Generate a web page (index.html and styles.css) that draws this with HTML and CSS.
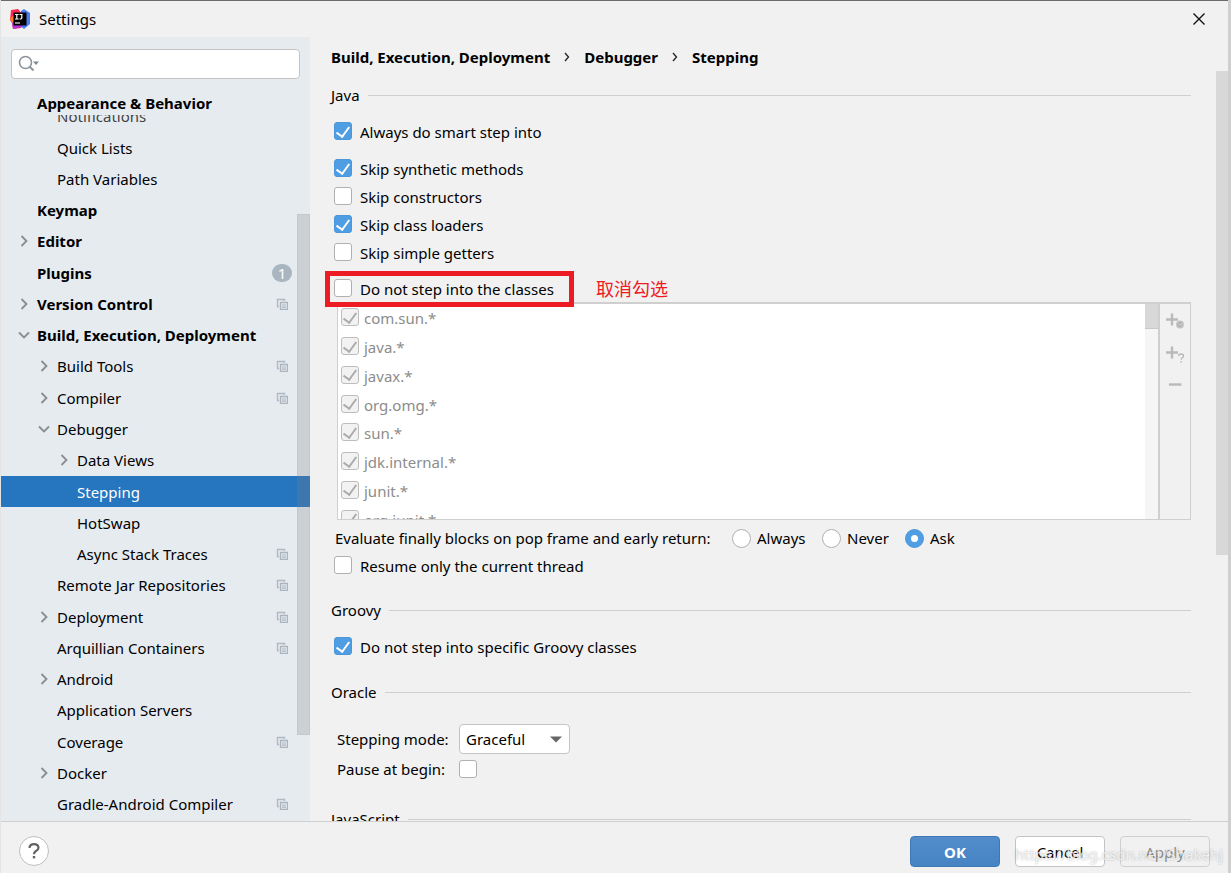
FILE: index.html
```
<!DOCTYPE html>
<html lang="en">
<head>
<meta charset="utf-8">
<title>Settings</title>
<link rel="stylesheet" href="styles.css">
</head>
<body>
<svg class="defs" aria-hidden="true">
  <symbol id="right" viewBox="0 0 12 12"><path d="M3.500 1l5 5-5 5" fill="none" stroke="#8a8d90" stroke-width="1.800"/></symbol>
  <symbol id="down" viewBox="0 0 12 12"><path d="M1 3.500l5 5 5-5" fill="none" stroke="#8a8d90" stroke-width="1.800"/></symbol>
  <symbol id="copy" viewBox="0 0 12 12"><path d="M3 8.500H1.500V1.500h7V3" fill="none" stroke="#b0b9c1" stroke-width="1.400"/><path d="M4.500 4.500h7v7h-7z" fill="#e6ebf0" stroke="#a9b4bd" stroke-width="1.400"/><path d="M6 7h4M6 9.200h4" stroke="#a9b4bd" stroke-width="1.200"/></symbol>
</svg>
<div class="window">
  <header class="titlebar">
    <svg class="logo" viewBox="0 0 20 20">
      <path d="M1 1l7-1 5 6-2 13-8 1L2 14l-2-3z" fill="#fe2857"/>
      <path d="M0 9l5-3v9l-3-1z" fill="#fc801d"/>
      <path d="M11 2l3-2 6 4v11l-6 5-4-3z" fill="#4a7cf0"/>
      <path d="M2 14l9-10 5 1-4 13-9 2z" fill="#b034d8"/>
      <path d="M3.500 3.500h13v13h-13z" fill="#000"/>
      <path d="M5 5.500h3.600M6.800 5.500v4.500M5 10h3.600M9.500 5.500h3M11.800 5v3.700q0 1.500-2.300 1.300" fill="none" stroke="#fff" stroke-width="1.200"/>
      <path d="M5 14h5" stroke="#fff" stroke-width="1.100"/>
    </svg>
    <h1 class="title">Settings</h1>
    <button class="close" aria-label="Close"><svg viewBox="0 0 12 12"><path d="M.5.5l11 11M11.500.5l-11 11" stroke="#111" stroke-width="1.400"/></svg></button>
  </header>

  <div class="body">
    <aside class="sidebar">
      <div class="search">
        <svg viewBox="0 0 22 18"><circle cx="7.500" cy="7.500" r="6" fill="none" stroke="#8b949c" stroke-width="1.600"/><path d="M11.500 11.500l4 4" stroke="#8b949c" stroke-width="2"/><path d="M15 6.500h6l-3 3.500z" fill="#7d8790"/></svg>
        <input type="text" aria-label="Search settings">
      </div>
      <div class="tree-head">Appearance &amp; Behavior</div>
      <ul class="tree">
        <li class="l1 cut"><i></i><span>Notifications</span></li>
        <li class="l1"><i></i><span>Quick Lists</span></li>
        <li class="l1"><i></i><span>Path Variables</span></li>
        <li class="l0"><i></i><span>Keymap</span></li>
        <li class="l0"><i><svg><use href="#right"/></svg></i><span>Editor</span></li>
        <li class="l0"><i></i><span>Plugins</span><b><em class="count">1</em></b></li>
        <li class="l0"><i><svg><use href="#right"/></svg></i><span>Version Control</span><b><svg><use href="#copy"/></svg></b></li>
        <li class="l0"><i><svg><use href="#down"/></svg></i><span>Build, Execution, Deployment</span></li>
        <li class="l1"><i><svg><use href="#right"/></svg></i><span>Build Tools</span><b><svg><use href="#copy"/></svg></b></li>
        <li class="l1"><i><svg><use href="#right"/></svg></i><span>Compiler</span><b><svg><use href="#copy"/></svg></b></li>
        <li class="l1"><i><svg><use href="#down"/></svg></i><span>Debugger</span></li>
        <li class="l2"><i><svg><use href="#right"/></svg></i><span>Data Views</span></li>
        <li class="l2 selected"><i></i><span>Stepping</span></li>
        <li class="l2"><i></i><span>HotSwap</span></li>
        <li class="l2"><i></i><span>Async Stack Traces</span><b><svg><use href="#copy"/></svg></b></li>
        <li class="l1"><i></i><span>Remote Jar Repositories</span><b><svg><use href="#copy"/></svg></b></li>
        <li class="l1"><i><svg><use href="#right"/></svg></i><span>Deployment</span><b><svg><use href="#copy"/></svg></b></li>
        <li class="l1"><i></i><span>Arquillian Containers</span><b><svg><use href="#copy"/></svg></b></li>
        <li class="l1"><i><svg><use href="#right"/></svg></i><span>Android</span></li>
        <li class="l1"><i></i><span>Application Servers</span></li>
        <li class="l1"><i></i><span>Coverage</span><b><svg><use href="#copy"/></svg></b></li>
        <li class="l1"><i><svg><use href="#right"/></svg></i><span>Docker</span></li>
        <li class="l1"><i></i><span>Gradle-Android Compiler</span><b><svg><use href="#copy"/></svg></b></li>
      </ul>
      <div class="side-thumb"></div>
    </aside>

    <main class="main">
      <nav class="crumbs">
        <span>Build, Execution, Deployment</span>
        <svg viewBox="0 0 6 10"><path d="M1 1l3.500 4L1 9" fill="none" stroke="#222" stroke-width="1.300"/></svg>
        <span>Debugger</span>
        <svg viewBox="0 0 6 10"><path d="M1 1l3.500 4L1 9" fill="none" stroke="#222" stroke-width="1.300"/></svg>
        <span>Stepping</span>
      </nav>
      <div class="scroll">
        <div class="content">
          <section>
            <h2 class="group">Java</h2>
            <label class="check lead"><input type="checkbox" checked>Always do smart step into</label>
            <label class="check"><input type="checkbox" checked>Skip synthetic methods</label>
            <label class="check"><input type="checkbox">Skip constructors</label>
            <label class="check"><input type="checkbox" checked>Skip class loaders</label>
            <label class="check"><input type="checkbox">Skip simple getters</label>
            <div class="marked">
              <label class="check boxed"><input type="checkbox">Do not step into the classes</label>
              <span class="note">取消勾选</span>
            </div>
            <div class="panel">
              <ul class="classes">
                <li><label><input type="checkbox" checked disabled>com.sun.*</label></li>
                <li><label><input type="checkbox" checked disabled>java.*</label></li>
                <li><label><input type="checkbox" checked disabled>javax.*</label></li>
                <li><label><input type="checkbox" checked disabled>org.omg.*</label></li>
                <li><label><input type="checkbox" checked disabled>sun.*</label></li>
                <li><label><input type="checkbox" checked disabled>jdk.internal.*</label></li>
                <li><label><input type="checkbox" checked disabled>junit.*</label></li>
                <li><label><input type="checkbox" checked disabled>org.junit.*</label></li>
              </ul>
              <div class="track"><div class="thumb"></div></div>
              <div class="tools">
                <button aria-label="Add class" disabled><svg viewBox="0 0 20 18"><path d="M1 7.500h12M7 1.500v12" stroke="#b9b9b9" stroke-width="2.400"/><circle cx="15" cy="12.500" r="4" fill="#c4c4c4"/><path d="M16.500 11.200a2 2 0 1 0 0 2.600" fill="none" stroke="#aaa"/></svg></button>
                <button aria-label="Add pattern" disabled><svg viewBox="0 0 20 18"><path d="M1 7.500h12M7 1.500v12" stroke="#b9b9b9" stroke-width="2.400"/><path d="M13.500 11q.3-2 2.600-2t2.400 2q0 1.300-1.500 2-.8.500-.8 1.800M16.200 16v1.500" fill="none" stroke="#b4b4b4" stroke-width="1.300"/></svg></button>
                <button aria-label="Remove" disabled><svg viewBox="0 0 20 18"><path d="M4 6.500h12.500" stroke="#b9b9b9" stroke-width="2.400"/></svg></button>
              </div>
            </div>
            <fieldset class="radios">
              <legend class="hidden">Evaluate finally blocks</legend>
              <span class="question">Evaluate finally blocks on pop frame and early return:</span>
              <label><input type="radio" name="fin">Always</label>
              <label><input type="radio" name="fin">Never</label>
              <label><input type="radio" name="fin" checked>Ask</label>
            </fieldset>
            <label class="check"><input type="checkbox">Resume only the current thread</label>
          </section>
          <section class="groovy">
            <h2 class="group">Groovy</h2>
            <label class="check"><input type="checkbox" checked>Do not step into specific Groovy classes</label>
          </section>
          <section class="oracle">
            <h2 class="group">Oracle</h2>
            <div class="form">
              <label for="mode">Stepping mode:</label>
              <div class="select"><select id="mode"><option>Graceful</option></select><svg viewBox="0 0 12 7"><path d="M0 .5h12l-6 6z" fill="#666"/></svg></div>
              <label for="pause">Pause at begin:</label>
              <input type="checkbox" id="pause">
            </div>
          </section>
          <section class="javascript">
            <h2 class="group">JavaScript</h2>
          </section>
        </div>
        <div class="main-track"><div class="main-thumb"></div></div>
      </div>
    </main>
  </div>

  <footer class="footer">
    <button class="help" aria-label="Help"><svg viewBox="0 0 12 16"><path d="M1.500 5Q1.700 1.200 6 1.200T10.500 4.800Q10.500 6.600 8 8 6 9.200 6 11.200" fill="none" stroke="#636363" stroke-width="2.200"/><path d="M4.800 13h2.400v2.400H4.800z" fill="#636363"/></svg></button>
    <button class="btn primary">OK</button>
    <button class="btn">Cancel</button>
    <button class="btn off" disabled>Apply</button>
    <span class="watermark">https://blog.csdn.net/Shakehj</span>
  </footer>
</div>
</body>
</html>
```
FILE: styles.css
```
* { box-sizing: border-box; }
html, body { height: 100%; }
body {
  margin: 0;
  padding: 0 3px 0 1px;
  background: linear-gradient(90deg, #e4e4e4 50%, #cfcfcf 50%);
  font: 15px/20px "Noto Sans", "Noto Sans CJK SC", sans-serif;
  color: #000;
  overflow: hidden;
}
button, input, select { font: inherit; color: inherit; margin: 0; }
h1, h2, ul { margin: 0; padding: 0; font-size: inherit; font-weight: normal; list-style: none; }
svg { display: block; flex: none; }
.defs { position: absolute; width: 0; height: 0; }
.hidden { position: absolute; width: 1px; height: 1px; overflow: hidden; clip-path: inset(50%); padding: 0; }

.window {
  height: 100%;
  display: grid;
  grid-template-rows: 36px minmax(0, 1fr) 51px;
  background: #f1f1f1;
  border-top: 1px solid #6d6a6c;
}
.titlebar { display: flex; align-items: center; gap: 9px; padding: 0 23px 0 9px; }
.logo { width: 20px; height: 20px; }
.title { flex: 1; }
.close { border: 0; padding: 0; background: none; }
.close svg { width: 12px; height: 12px; }

.body { display: grid; grid-template-columns: 309px minmax(0, 1fr); grid-template-rows: minmax(0, 1fr); border-bottom: 1px solid #cfcfcf; }

.sidebar { position: relative; display: flex; flex-direction: column; min-height: 0; background: #e6ebf0; }
.search {
  display: flex; align-items: center;
  height: 30px; margin: 12px 10px 8px; padding-left: 6px;
  background: #fff; border: 1px solid #c4c4c4; border-radius: 4px;
}
.search svg { width: 22px; height: 18px; }
.search input { flex: 1; min-width: 0; border: 0; outline: 0; background: none; }
.tree-head { padding: 6px 0 2px 36px; font-weight: bold; }
.tree { flex: 1; min-height: 0; display: flex; flex-direction: column; padding-bottom: 1px; }
.tree li { flex: 1; display: flex; align-items: center; min-height: 0; padding-right: 18px; }
.tree li.l0 { padding-left: 17px; font-weight: bold; }
.tree li.l1 { padding-left: 37px; }
.tree li.l2 { padding-left: 57px; }
.tree li.cut { flex: 0 0 17px; align-items: flex-end; overflow: hidden; color: #444; }
.tree li.cut span { line-height: 32px; }
.tree i { width: 19px; flex: none; }
.tree i svg { width: 12px; height: 12px; }
.tree span { flex: 1; white-space: nowrap; }
.tree b { width: 20px; display: flex; justify-content: center; font-weight: normal; }
.tree b svg { width: 12px; height: 12px; }
.count { width: 20px; height: 18px; border-radius: 9px; background: #a9b5bf; color: #fff; font-style: normal; line-height: 18px; text-align: center; }
.tree .selected { background: #2675bf; color: #fff; }
.side-thumb { position: absolute; right: 0; top: 177px; bottom: 11%; width: 13px; background: rgba(128, 128, 128, .25); border: 1px solid rgba(128, 128, 128, .1); }

.main { display: flex; flex-direction: column; min-height: 0; }
.crumbs { display: flex; align-items: center; gap: 14px; padding: 10px 21px 4px; font-weight: bold; }
.crumbs svg { width: 6px; height: 10px; }
.scroll { flex: 1; min-height: 0; display: grid; grid-template-columns: minmax(0, 1fr) 12px; grid-template-rows: minmax(0, 1fr); overflow: hidden; }
.content { min-height: 0; padding: 14px 25px 0 21px; overflow: hidden; }
.main-thumb { height: 484px; background: #d8d8d8; }

.group { display: flex; align-items: center; gap: 8px; }
.group::after { content: ""; flex: 1; height: 1px; background: #cfcfcf; }

input[type="checkbox"], input[type="radio"] {
  appearance: none; flex: none;
  display: grid; place-items: center;
  width: 18px; height: 18px;
  background: #fff; border: 1px solid #b0b0b0; border-radius: 3px;
}
input[type="checkbox"]:checked { background: #4f9ee3; border-color: #4b97d9; }
input[type="checkbox"]:checked::before {
  content: ""; width: 6px; height: 11px;
  border: solid #fff; border-width: 0 2px 2px 0;
  transform: translateY(-1px) rotate(36deg);
}
input[type="checkbox"]:checked:disabled { background: #f2f2f2; border-color: #bdbdbd; }
input[type="checkbox"]:checked:disabled::before { border-color: #ababab; }
input[type="radio"] { border-radius: 50%; width: 19px; height: 19px; }
input[type="radio"]:checked { background: #4f9ee3; border-color: #4b97d9; }
input[type="radio"]:checked::before { content: ""; width: 7px; height: 7px; border-radius: 50%; background: #fff; }
label input[type="checkbox"] { margin-bottom: 2px; }

.check { display: flex; align-items: center; gap: 8px; height: 28px; padding-left: 3px; }
.lead { margin: 13px 0 9px; }
.marked { display: flex; align-items: center; gap: 28px; margin-top: 8px; }
.boxed { position: relative; height: 27px; min-width: 237px; }
.boxed::after { content: ""; position: absolute; inset: -4px -6px -5px -6px; border: 5px solid #ed1c24; z-index: 1; }
.note { color: #ed1c24; font: 18px/27px "Noto Sans CJK SC", sans-serif; }

.panel {
  display: grid; grid-template-columns: minmax(0, 1fr) 13px 32px;
  height: 218px; margin-left: 6px; overflow: hidden;
  border: 1px solid #cfcfcf; border-top-width: 2px;
}
.classes { display: grid; grid-template-rows: repeat(8, 1fr); height: 230px; background: #fff; color: #8c8c8c; }
.classes label { display: flex; align-items: center; gap: 5px; padding-left: 3px; height: 100%; }
.track { background: #f5f5f5; }
.thumb { height: 25px; background: #d8d8d8; border-bottom: 1px solid #c8c8c8; }
.tools { display: flex; flex-direction: column; gap: 15px; padding: 8px 0 0 5px; border-left: 2px solid #cfcfcf; }
.tools button { border: 0; padding: 0; background: none; }
.tools svg { width: 20px; height: 18px; }

.radios { display: flex; align-items: center; height: 32px; margin: 0; padding: 4px 0 0 4px; border: 0; gap: 14px; }
.radios label { display: flex; align-items: center; gap: 6px; min-width: 76px; }
.radios label:nth-of-type(2) { min-width: 69px; }
.question { min-width: 383px; }

.groovy { margin-top: 20px; }
.groovy .check { margin-top: 13px; }
.oracle { margin-top: 21px; }
.form { display: grid; grid-template-columns: 118px 111px; align-items: center; gap: 3px 4px; padding: 22px 0 0 6px; }
.select { position: relative; }
.select select { appearance: none; width: 100%; height: 30px; padding: 0 6px; background: #fff; border: 1px solid #c4c4c4; border-radius: 4px; }
.select svg { position: absolute; right: 8px; top: 12px; width: 12px; height: 7px; pointer-events: none; }
.form label { line-height: 24px; }
.javascript { margin-top: 28px; }

.footer { position: relative; display: flex; align-items: flex-start; gap: 15px; padding: 14px 18px 0; }
.help { display: grid; place-items: center; width: 30px; height: 30px; margin-right: auto; padding: 0; background: #fff; border: 1px solid #bfbfbf; border-radius: 50%; }
.help svg { width: 12px; height: 16px; }
.btn { width: 90px; height: 31px; padding: 0; background: #fff; border: 1px solid #c4c4c4; border-radius: 4px; }
.primary { background: linear-gradient(#528ccb, #4684c4); border-color: #3f78b5; color: #fff; font-weight: bold; }
.off { background: #f1f1f1; color: #8c8c8c; border-color: #cfcfcf; }
.watermark { position: absolute; right: 5px; top: 22px; color: rgba(255, 255, 255, .75); text-shadow: 0 0 2px rgba(120, 120, 120, .6); pointer-events: none; }
```
